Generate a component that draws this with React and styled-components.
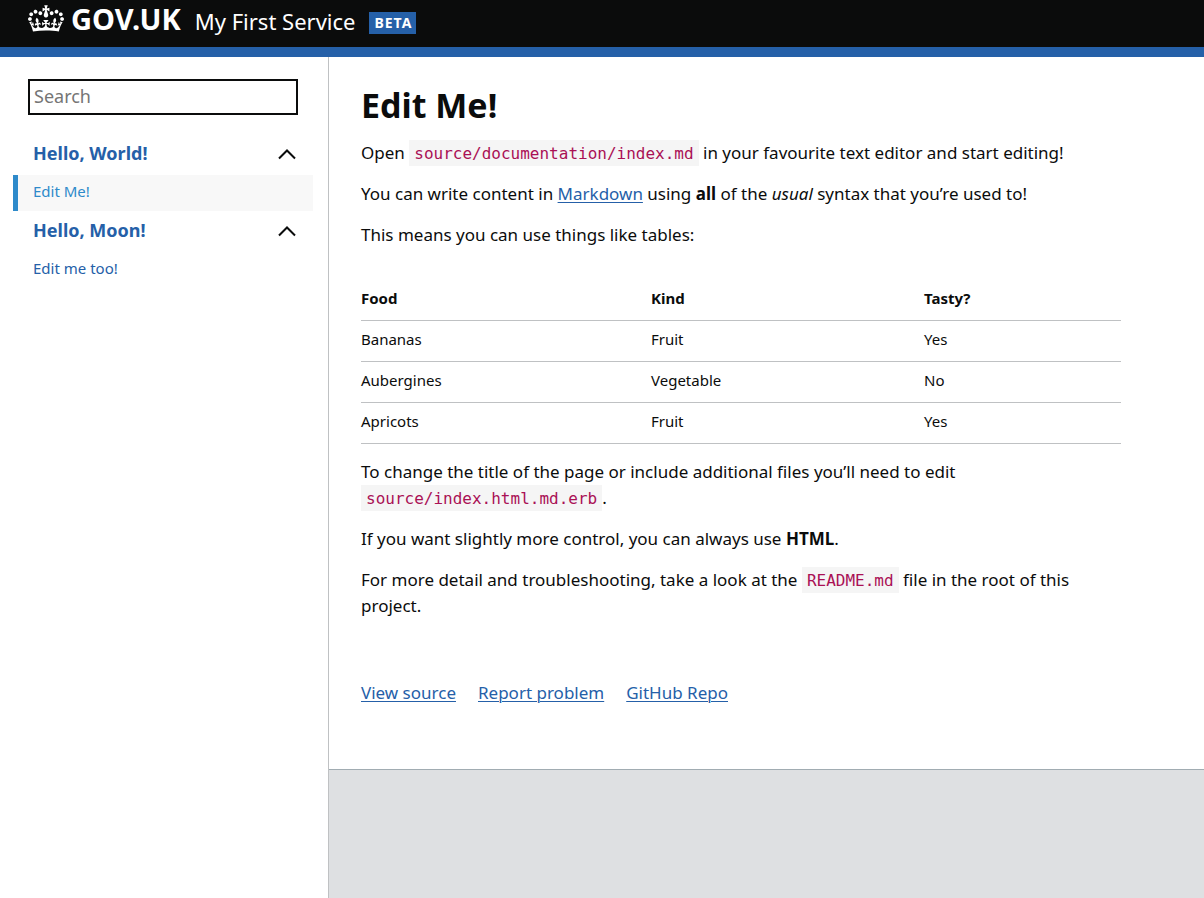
import React, { useState } from "react";
import styled, { createGlobalStyle, css } from "styled-components";

const GlobalStyle = createGlobalStyle`
  *, *::before, *::after { box-sizing: border-box; }
  body {
    margin: 0;
    background: #fff;
    color: #0b0c0c;
    font-family: "Noto Sans", "Liberation Sans", sans-serif;
    font-size: 17px;
    line-height: 26px;
  }
`;

const Page = styled.div`
  display: flex;
  flex-direction: column;
  min-height: 100vh;
`;

const Header = styled.header`
  display: flex;
  align-items: center;
  height: 57px;
  padding: 0 28px 4px;
  background: #0b0c0c;
  border-bottom: 10px solid #2560a8;
  color: #fff;
`;

const HomeLink = styled.a`
  display: flex;
  align-items: center;
  color: inherit;
  text-decoration: none;
`;

const Crown = styled.svg`
  width: 36px;
  height: 27px;
  margin-bottom: 6px;
  fill: currentColor;
`;

const Wordmark = styled.span`
  margin: 0 14px 6px 7px;
  font-size: 29px;
  font-weight: 700;
  line-height: 36px;
`;

const ServiceName = styled.span`
  margin-bottom: 2px;
  font-size: 22px;
  line-height: 30px;
`;

const Phase = styled.strong`
  margin: 3px 0 0 14px;
  padding: 0 4px 0 5px;
  background: #2560a8;
  font-size: 14px;
  font-weight: 700;
  line-height: 22px;
  letter-spacing: 1px;
`;

const Columns = styled.div`
  display: flex;
  flex: 1;
`;

const Sidebar = styled.aside`
  flex: 0 0 329px;
  padding: 22px 15px 22px 13px;
  border-right: 1px solid #bfc1c3;
`;

const SearchForm = styled.form`
  margin: 0 15px 19px;
`;

const SearchInput = styled.input`
  display: block;
  width: 100%;
  height: 36px;
  padding: 0 4px 2px;
  border: 2px solid #0b0c0c;
  border-radius: 0;
  background: #fff;
  color: #0b0c0c;
  font: inherit;
  font-size: 18px;

  &::placeholder { color: #757575; opacity: 1; }
`;

const NavList = styled.ul`
  margin: 0;
  padding: 0;
  list-style: none;
`;

const NavHeading = styled.div`
  display: flex;
  align-items: center;
  justify-content: space-between;
  height: 41px;
  padding: 0 17px 4px 20px;
`;

const NavHeadingLink = styled.a`
  color: #2560a8;
  font-size: 18px;
  font-weight: 700;
  text-decoration: none;
`;

const Toggle = styled.button`
  display: flex;
  padding: 3px 0 0;
  border: 0;
  background: none;
  color: #0b0c0c;
  cursor: pointer;
`;

const Chevron = styled.svg`
  width: 18px;
  height: 12px;
  fill: none;
  stroke: currentColor;
  stroke-width: 2;
  transform: ${({ $open }) => ($open ? "none" : "rotate(180deg)")};
`;

const NavLink = styled.a`
  display: block;
  padding: 3px 15px 7px;
  border-left: 5px solid transparent;
  color: #2560a8;
  font-size: 15px;
  text-decoration: none;

  ${({ $current }) =>
    $current &&
    css`
      border-left-color: #2e8aca;
      background: #f8f8f8;
      color: #2e8aca;
    `}
`;

const Pane = styled.div`
  display: flex;
  flex: 1;
  flex-direction: column;
  min-width: 0;
  background: #dee0e2;
`;

const Content = styled.main`
  padding: 28px 32px 63px;
  border-bottom: 1px solid #a1acb2;
  background: #fff;
`;

const Article = styled.article`
  max-width: 760px;
`;

const Title = styled.h1`
  margin: 0 0 15px;
  font-size: 34px;
  font-weight: 700;
  line-height: 40px;
`;

const Paragraph = styled.p`
  margin: 0 0 15px;
`;

const Link = styled.a`
  color: #2560a8;
  text-decoration: underline;
  text-decoration-thickness: 1px;
  text-underline-offset: 2px;
`;

const Code = styled.code`
  padding: 4px 5px 3px;
  background: #f5f5f5;
  color: #aa1155;
  font-family: "DejaVu Sans Mono", "Liberation Mono", monospace;
  font-size: 16px;
  line-height: 16px;
`;

const Table = styled.table`
  width: 100%;
  margin: 32px 0 15px;
  border-collapse: separate;
  border-spacing: 0;
  table-layout: fixed;
  font-size: 15px;
  line-height: 20px;

  th, td {
    padding: 8px 0 12px;
    border-bottom: 1px solid #bfc1c3;
    text-align: left;
  }
  th:nth-child(1) { width: 290px; }
  th:nth-child(2) { width: 273px; }
`;

const SourceLinks = styled.ul`
  display: flex;
  flex-wrap: wrap;
  gap: 22px;
  margin: 61px 0 0;
  padding: 0;
  list-style: none;
`;

const foods = [
  ["Bananas", "Fruit", "Yes"],
  ["Aubergines", "Vegetable", "No"],
  ["Apricots", "Fruit", "Yes"],
];

const sections = [
  { title: "Hello, World!", items: [{ label: "Edit Me!", current: true }] },
  { title: "Hello, Moon!", items: [{ label: "Edit me too!" }] },
];

function NavSection({ title, items }) {
  const [open, setOpen] = useState(true);
  return (
    <li>
      <NavHeading>
        <NavHeadingLink href="#">{title}</NavHeadingLink>
        <Toggle
          type="button"
          aria-expanded={open}
          aria-label={`Toggle ${title}`}
          onClick={() => setOpen(!open)}
        >
          <Chevron $open={open} viewBox="0 0 18 12" aria-hidden="true">
            <path d="M1 10.5 9 2.5l8 8" />
          </Chevron>
        </Toggle>
      </NavHeading>
      {open && (
        <NavList>
          {items.map((item) => (
            <li key={item.label}>
              <NavLink
                href="#"
                $current={item.current}
                aria-current={item.current ? "page" : undefined}
              >
                {item.label}
              </NavLink>
            </li>
          ))}
        </NavList>
      )}
    </li>
  );
}

export default function App() {
  return (
    <Page>
      <GlobalStyle />
      <Header>
        <HomeLink href="#">
          <Crown viewBox="0 0 132 97" aria-hidden="true">
            <path
              fillRule="evenodd"
              d="M25 30.2c3.5 1.5 7.7-.2 9.1-3.7 1.5-3.6-.2-7.8-3.9-9.2-3.6-1.4-7.6.3-9.1 3.9-1.4 3.5.3 7.5 3.9 9zM9 39.5c3.6 1.5 7.8-.2 9.2-3.7 1.5-3.6-.2-7.8-3.9-9.1-3.6-1.5-7.6.2-9.1 3.8-1.4 3.5.3 7.5 3.8 9zM4.4 57.2c3.5 1.5 7.7-.2 9.1-3.8 1.5-3.6-.2-7.7-3.9-9.1-3.5-1.5-7.6.3-9.1 3.8-1.4 3.5.3 7.6 3.9 9.1zm38.3-21.4c3.5 1.5 7.7-.2 9.1-3.8 1.5-3.6-.2-7.7-3.9-9.1-3.6-1.5-7.6.3-9.1 3.8-1.3 3.6.4 7.7 3.9 9.1zm64.4-5.6c-3.6 1.5-7.8-.2-9.1-3.7-1.5-3.6.2-7.8 3.8-9.2 3.6-1.4 7.7.3 9.2 3.9 1.3 3.5-.4 7.5-3.9 9zm15.9 9.3c-3.6 1.5-7.7-.2-9.1-3.7-1.5-3.6.2-7.8 3.7-9.1 3.6-1.5 7.7.2 9.2 3.8 1.5 3.5-.3 7.5-3.8 9zm4.7 17.7c-3.6 1.5-7.8-.2-9.2-3.8-1.5-3.6.2-7.7 3.9-9.1 3.6-1.5 7.7.3 9.2 3.8 1.3 3.5-.4 7.6-3.9 9.1zM89.3 35.8c-3.6 1.5-7.8-.2-9.2-3.8-1.4-3.6.2-7.7 3.9-9.1 3.6-1.5 7.7.3 9.2 3.8 1.4 3.6-.3 7.7-3.9 9.1zM69.7 17.7l8.9 4.7V9.3l-8.9 2.8c-.2-.3-.5-.6-.9-.9L72.4 0H59.6l3.5 11.2c-.3.3-.6.5-.9.9l-8.8-2.8v13.1l8.8-4.7c.3.3.6.7.9.9l-5 15.4v.1c-.2.8-.4 1.6-.4 2.4 0 4.1 3.1 7.5 7 8.1h.2c.3 0 .7.1 1 .1.4 0 .7 0 1-.1h.2c4-.6 7.1-4.1 7.1-8.1 0-.8-.1-1.7-.4-2.4V34l-5.1-15.4c.4-.2.7-.6 1-.9zM66 92.8c16.9 0 32.8 1.1 47.1 3.2 4-16.9 8.9-26.7 14-33.5l-9.6-3.4c1 4.9 1.1 7.2 0 10.2-1.5-1.4-3-4.3-4.2-8.7L108.6 76c2.8-2 5-3.2 7.5-3.3-4.4 9.4-10 11.9-13.6 11.2-4.3-.8-6.3-4.6-5.6-7.9 1-4.7 5.7-5.9 8-.5 4.3-8.7-3-11.4-7.6-8.8 7.1-7.2 7.9-13.5 2.1-21.1-8 6.1-8.1 12.3-4.5 20.8-4.7-5.4-12.1-2.5-9.5 6.2 3.4-5.2 7.9-2 7.2 3.1-.6 4.3-6.4 7.8-13.5 7.2-10.3-.9-10.9-8-11.2-13.8 2.5-.5 7.1 1.8 11 7.3L80.2 60c-4.1 4.4-8 5.3-12.3 5.4 1.4-4.4 8-11.6 8-11.6H55.5s6.4 7.2 7.9 11.6c-4.2-.1-8-1-12.3-5.4l1.4 16.4c3.9-5.5 8.5-7.7 10.9-7.3-.3 5.8-.9 12.8-11.1 13.8-7.2.6-12.9-2.9-13.5-7.2-.7-5 3.8-8.3 7.1-3.1 2.7-8.7-4.6-11.6-9.4-6.2 3.7-8.5 3.6-14.7-4.6-20.8-5.8 7.6-5 13.9 2.2 21.1-4.7-2.6-11.9.1-7.7 8.8 2.3-5.5 7.1-4.2 8.1.5.7 3.3-1.3 7.1-5.7 7.9-3.5.7-9-1.8-13.5-11.2 2.5.1 4.7 1.3 7.5 3.3l-4.7-15.4c-1.2 4.4-2.7 7.2-4.3 8.7-1.1-3-.9-5.3 0-10.2l-9.5 3.4c5 6.9 9.9 16.7 14 33.5 14.8-2.1 30.8-3.2 47.7-3.2z"
            />
          </Crown>
          <Wordmark>GOV.UK</Wordmark>
          <ServiceName>My First Service</ServiceName>
        </HomeLink>
        <Phase>BETA</Phase>
      </Header>
      <Columns>
        <Sidebar>
          <SearchForm role="search" onSubmit={(e) => e.preventDefault()}>
            <SearchInput type="text" placeholder="Search" aria-label="Search" />
          </SearchForm>
          <nav aria-label="Table of contents">
            <NavList>
              {sections.map((section) => (
                <NavSection key={section.title} {...section} />
              ))}
            </NavList>
          </nav>
        </Sidebar>
        <Pane>
          <Content>
            <Article>
              <Title>Edit Me!</Title>
              <Paragraph>
                Open <Code>source/documentation/index.md</Code> in your
                favourite text editor and start editing!
              </Paragraph>
              <Paragraph>
                You can write content in <Link href="#">Markdown</Link> using{" "}
                <strong>all</strong> of the <em>usual</em> syntax that you’re
                used to!
              </Paragraph>
              <Paragraph>This means you can use things like tables:</Paragraph>
              <Table>
                <thead>
                  <tr>
                    <th scope="col">Food</th>
                    <th scope="col">Kind</th>
                    <th scope="col">Tasty?</th>
                  </tr>
                </thead>
                <tbody>
                  {foods.map((row) => (
                    <tr key={row[0]}>
                      {row.map((cell) => (
                        <td key={cell}>{cell}</td>
                      ))}
                    </tr>
                  ))}
                </tbody>
              </Table>
              <Paragraph>
                To change the title of the page or include additional files
                you’ll need to edit <Code>source/index.html.md.erb</Code>.
              </Paragraph>
              <Paragraph>
                If you want slightly more control, you can always use{" "}
                <strong>HTML</strong>.
              </Paragraph>
              <Paragraph>
                For more detail and troubleshooting, take a look at the{" "}
                <Code>README.md</Code> file in the root of this project.
              </Paragraph>
            </Article>
            <SourceLinks>
              <li><Link href="#">View source</Link></li>
              <li><Link href="#">Report problem</Link></li>
              <li><Link href="#">GitHub Repo</Link></li>
            </SourceLinks>
          </Content>
        </Pane>
      </Columns>
    </Page>
  );
}
